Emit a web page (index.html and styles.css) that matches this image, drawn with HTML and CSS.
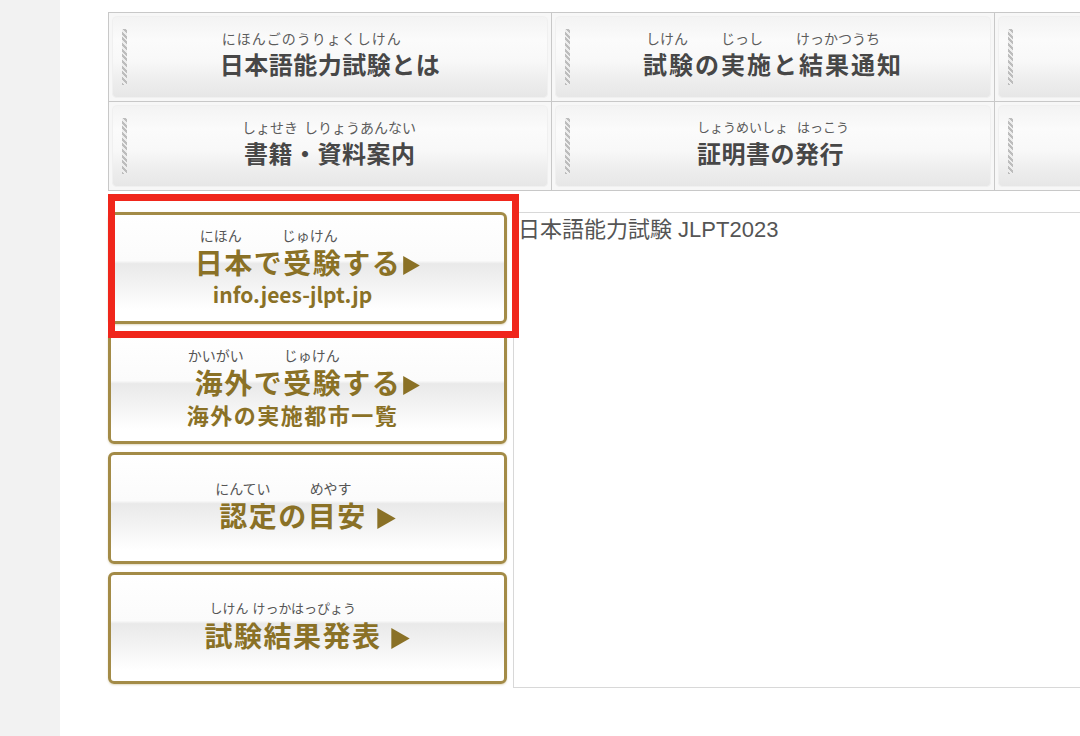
FILE: index.html
```html
<!DOCTYPE html>
<html lang="ja">
<head>
<meta charset="utf-8">
<title>日本語能力試験 JLPT</title>
<link rel="stylesheet" href="styles.css">
</head>
<body>
<div class="page">
  <div class="gutter"></div>
  <div class="main">
    <div class="nav">
      <div class="navcell">
        <a class="navbtn">
          <span class="lbl">
            <span class="rb nr-a"><span>にほんごのうりょくしけん</span></span>
            <span class="nt">日本語能力試験とは</span>
          </span>
        </a>
      </div>
      <div class="navcell">
        <a class="navbtn">
          <span class="lbl">
            <span class="rb nr-b"><span>しけん</span><span>じっし</span><span>けっかつうち</span></span>
            <span class="nt wide">試験の実施と結果通知</span>
          </span>
        </a>
      </div>
      <div class="navcell"><a class="navbtn"></a></div>
      <div class="navcell">
        <a class="navbtn">
          <span class="lbl">
            <span class="rb nr-c"><span>しょせき</span><span>しりょうあんない</span></span>
            <span class="nt">書籍・資料案内</span>
          </span>
        </a>
      </div>
      <div class="navcell">
        <a class="navbtn">
          <span class="lbl">
            <span class="rb nr-d"><span>しょうめいしょ</span><span>はっこう</span></span>
            <span class="nt">証明書の発行</span>
          </span>
        </a>
      </div>
      <div class="navcell"><a class="navbtn"></a></div>
    </div>

    <div class="lower">
      <div class="btns">
        <a class="gbtn">
          <span class="lbl">
            <span class="rb gr-1"><span>にほん</span><span>じゅけん</span></span>
            <span class="gt">日本で受験する<svg class="tri" viewBox="0 0 14 16" width="17" height="19"><path d="M0 0 L14 8 L0 16 Z"/></svg></span>
          </span>
          <span class="gsub latin">info.jees-jlpt.jp</span>
        </a>
        <a class="gbtn">
          <span class="lbl">
            <span class="rb gr-2"><span>かいがい</span><span>じゅけん</span></span>
            <span class="gt">海外で受験する<svg class="tri" viewBox="0 0 14 16" width="17" height="19"><path d="M0 0 L14 8 L0 16 Z"/></svg></span>
          </span>
          <span class="gsub">海外の実施都市一覧</span>
        </a>
        <a class="gbtn">
          <span class="lbl">
            <span class="rb gr-3"><span>にんてい</span><span>めやす</span></span>
            <span class="gt">認定の目安 <svg class="tri big" viewBox="0 0 14 16" width="19" height="21"><path d="M0 0 L14 8 L0 16 Z"/></svg></span>
          </span>
        </a>
        <a class="gbtn">
          <span class="lbl">
            <span class="rb gr-4"><span>しけん</span><span>けっかはっぴょう</span></span>
            <span class="gt">試験結果発表 <svg class="tri big" viewBox="0 0 14 16" width="19" height="21"><path d="M0 0 L14 8 L0 16 Z"/></svg></span>
          </span>
        </a>
      </div>
      <div class="content">日本語能力試験 JLPT2023</div>
      <div class="highlight"></div>
    </div>
  </div>
</div>
</body>
</html>
```

FILE: styles.css
```css
html, body {
  margin: 0;
  padding: 0;
  background: #ffffff;
  overflow: hidden;
}

body {
  font-family: "Noto Sans CJK JP", "Noto Sans", sans-serif;
}

.page {
  display: flex;
  height: 736px;
}

.gutter {
  width: 60px;
  flex: none;
  background: #f2f2f2;
}

.main {
  flex: 1;
  min-width: 0;
  padding: 12px 0 0 48px;
}

/* ---------- top navigation grid ---------- */
.nav {
  display: grid;
  grid-template-columns: repeat(3, 442px);
  grid-auto-rows: 88px;
  gap: 1px;
  width: max-content;
  background: #c8c8c8;
  border: 1px solid #c8c8c8;
}

.navcell {
  display: flex;
  padding: 3px;
  background: #f7f7f7;
}

.navbtn {
  flex: 1;
  display: flex;
  align-items: center;
  justify-content: center;
  border-radius: 5px;
  text-decoration: none;
  padding-bottom: 7px;
  box-shadow: inset 0 0 0 1px #f0f0f0;
  background-image:
    repeating-linear-gradient(45deg, #bdbdbd 0 2px, #ededed 2px 4px),
    linear-gradient(180deg, #f3f3f3 0%, #fbfbfb 30%, #f8f8f8 55%, #ededed 80%, #e6e6e6 100%);
  background-size: 5px 56px, auto;
  background-position: 10px center, 0 0;
  background-repeat: no-repeat;
}

/* label = ruby line + main text line */
.lbl {
  display: flex;
  flex-direction: column;
  align-items: flex-start;
}

.rb {
  display: flex;
  white-space: nowrap;
  font-size: 14px;
  line-height: 16px;
  font-weight: 400;
  color: #5c5c5c;
}

.nav .rb {
  margin-bottom: 4px;
}

.nt {
  font-size: 24px;
  line-height: 28px;
  font-weight: 700;
  color: #474747;
  letter-spacing: 0.5px;
  white-space: nowrap;
}

.nt.wide {
  letter-spacing: 2px;
}

.nr-a {
  padding-left: 2px;
  letter-spacing: 1px;
}

.nr-b {
  padding-left: 3px;
  gap: 33px;
}

.nr-c {
  margin-left: -2px;
  gap: 6px;
}

.nr-d {
  font-size: 13px;
  gap: 9px;
}

/* ---------- lower area ---------- */
.lower {
  position: relative;
  display: flex;
  align-items: flex-start;
  gap: 6px;
  margin-top: 21px;
}

.btns {
  width: 399px;
  flex: none;
  display: flex;
  flex-direction: column;
  gap: 8px;
}

.gbtn {
  height: 112px;
  box-sizing: border-box;
  padding-bottom: 4px;
  border: 3px solid #a38b47;
  border-radius: 6px;
  display: flex;
  flex-direction: column;
  align-items: center;
  justify-content: center;
  color: #8a7126;
  text-decoration: none;
  background: linear-gradient(180deg, #ffffff 0%, #fbfbfb 43%, #e9e9e9 46%, #f4f4f4 68%, #ffffff 90%);
  box-shadow: 0 1px 2px rgba(170, 150, 90, 0.35);
}

.gbtn .rb {
  color: #555555;
  margin-bottom: 2px;
}

.gt {
  font-size: 28px;
  line-height: 34px;
  font-weight: 700;
  letter-spacing: 1.5px;
  white-space: nowrap;
}

.gr-1 {
  padding-left: 5px;
  gap: 40px;
}

.gr-2 {
  margin-left: -7px;
  gap: 40px;
}

.gr-3 {
  margin-left: -4px;
  gap: 39px;
}

.gr-4 {
  padding-left: 5px;
  gap: 4px;
  font-size: 13px;
}

.tri {
  fill: #8a7126;
  vertical-align: -1px;
  margin-left: 2px;
}

.tri.big {
  vertical-align: -2px;
  margin-left: 2px;
}

.gsub {
  font-size: 22px;
  line-height: 24px;
  font-weight: 700;
  letter-spacing: 1.5px;
  margin-top: 3px;
  margin-right: 30px;
  white-space: nowrap;
}

.gsub.latin {
  font-size: 21px;
  letter-spacing: 0;
}

.content {
  flex: 1;
  height: 476px;
  box-sizing: border-box;
  border: 1px solid #d8d8d8;
  border-right: none;
  padding: 4px 4px;
  font-family: "Liberation Sans", "Noto Sans CJK JP", sans-serif;
  font-size: 22px;
  line-height: 1.15;
  color: #555555;
  white-space: nowrap;
}

.highlight {
  position: absolute;
  left: 0;
  top: -18px;
  width: 411px;
  height: 144px;
  box-sizing: border-box;
  border: 7px solid #f0261b;
  pointer-events: none;
}
```
